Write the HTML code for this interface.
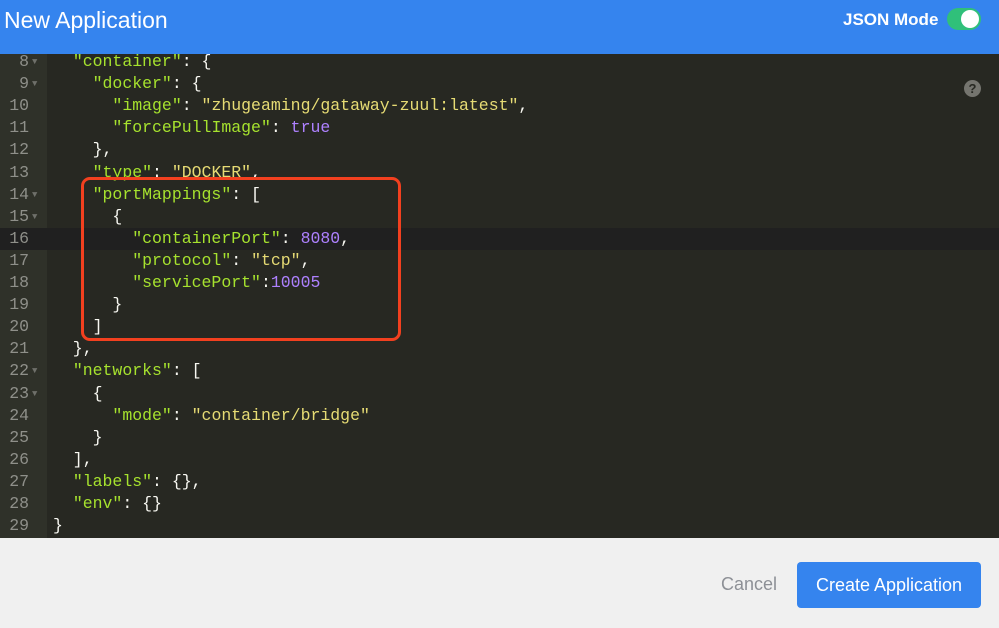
<!DOCTYPE html>
<html><head><style>
*{margin:0;padding:0;box-sizing:border-box}
body{width:999px;height:628px;overflow:hidden;background:#f0f0f0;font-family:"Liberation Sans",sans-serif;position:relative}
.hdr{position:absolute;left:0;top:0;width:999px;height:54px;background:#3584ee}
.title{position:absolute;left:4px;top:7px;color:#fff;font-size:23px}
.jm{position:absolute;left:843px;top:10px;color:#fff;font-size:17px;font-weight:bold}
.tg{position:absolute;left:947px;top:8px;width:34px;height:22px;border-radius:11px;background:#30c07a}
.tg:after{content:"";position:absolute;right:2px;top:2px;width:18px;height:18px;border-radius:50%;background:#fff}
.ed{position:absolute;left:0;top:54px;width:999px;height:484px;background:#272822;overflow:hidden}
.gut{position:absolute;left:0;top:0;width:47px;height:484px;background:#2f3129}
.ln{position:absolute;left:0;width:999px;height:22.1px;font-family:"Liberation Mono",monospace;font-size:16.5px;line-height:22.1px;color:#f8f8f2;white-space:pre}
.num{position:absolute;left:0;width:29px;text-align:right;color:#8f908a}
.ar{position:absolute;left:32px;color:#6f706a;font-size:9px}
.code{position:absolute;left:53px}
.k{color:#a6e22e}.s{color:#e6db74}.n{color:#ae81ff}
.hl{background:#202020}
.box{position:absolute;left:81px;top:177px;width:320px;height:164px;border:3px solid #f2401f;border-radius:9px}
.q{position:absolute;left:964px;top:80px;width:17px;height:17px;border-radius:50%;background:#75756f;color:#272822;font-size:13px;font-weight:bold;text-align:center;line-height:17px}
.cancel{position:absolute;left:721px;top:574px;color:#8d9096;font-size:18px}
.btn{position:absolute;left:797px;top:562px;width:184px;height:46px;border-radius:4px;background:#3584ee;color:#fff;font-size:18px;text-align:center;line-height:46px}
</style></head><body>
<div class="hdr"><div class="title">New Application</div><div class="jm">JSON Mode</div><div class="tg"></div></div>
<div class="ed">
<div class="gut"></div>
<div class="ln" style="top:-3px"><span class="num">8</span><span class="ar">▼</span><span class="code">  <span class="k">"container"</span>: {</span></div>
<div class="ln" style="top:19.1px"><span class="num">9</span><span class="ar">▼</span><span class="code">    <span class="k">"docker"</span>: {</span></div>
<div class="ln" style="top:41.2px"><span class="num">10</span><span class="code">      <span class="k">"image"</span>: <span class="s">"zhugeaming/gataway-zuul:latest"</span>,</span></div>
<div class="ln" style="top:63.3px"><span class="num">11</span><span class="code">      <span class="k">"forcePullImage"</span>: <span class="n">true</span></span></div>
<div class="ln" style="top:85.4px"><span class="num">12</span><span class="code">    },</span></div>
<div class="ln" style="top:107.5px"><span class="num">13</span><span class="code">    <span class="k">"type"</span>: <span class="s">"DOCKER"</span>,</span></div>
<div class="ln" style="top:129.6px"><span class="num">14</span><span class="ar">▼</span><span class="code">    <span class="k">"portMappings"</span>: [</span></div>
<div class="ln" style="top:151.7px"><span class="num">15</span><span class="ar">▼</span><span class="code">      {</span></div>
<div class="ln hl" style="top:173.8px"><span class="num">16</span><span class="code">        <span class="k">"containerPort"</span>: <span class="n">8080</span>,</span></div>
<div class="ln" style="top:195.9px"><span class="num">17</span><span class="code">        <span class="k">"protocol"</span>: <span class="s">"tcp"</span>,</span></div>
<div class="ln" style="top:218px"><span class="num">18</span><span class="code">        <span class="k">"servicePort"</span>:<span class="n">10005</span></span></div>
<div class="ln" style="top:240.1px"><span class="num">19</span><span class="code">      }</span></div>
<div class="ln" style="top:262.2px"><span class="num">20</span><span class="code">    ]</span></div>
<div class="ln" style="top:284.3px"><span class="num">21</span><span class="code">  },</span></div>
<div class="ln" style="top:306.4px"><span class="num">22</span><span class="ar">▼</span><span class="code">  <span class="k">"networks"</span>: [</span></div>
<div class="ln" style="top:328.5px"><span class="num">23</span><span class="ar">▼</span><span class="code">    {</span></div>
<div class="ln" style="top:350.6px"><span class="num">24</span><span class="code">      <span class="k">"mode"</span>: <span class="s">"container/bridge"</span></span></div>
<div class="ln" style="top:372.7px"><span class="num">25</span><span class="code">    }</span></div>
<div class="ln" style="top:394.8px"><span class="num">26</span><span class="code">  ],</span></div>
<div class="ln" style="top:416.9px"><span class="num">27</span><span class="code">  <span class="k">"labels"</span>: {},</span></div>
<div class="ln" style="top:439px"><span class="num">28</span><span class="code">  <span class="k">"env"</span>: {}</span></div>
<div class="ln" style="top:461.1px"><span class="num">29</span><span class="code">}</span></div>
<div class="q" style="top:26px">?</div>
</div>
<div class="box"></div>
<div class="cancel">Cancel</div>
<div class="btn">Create Application</div>
</body></html>
